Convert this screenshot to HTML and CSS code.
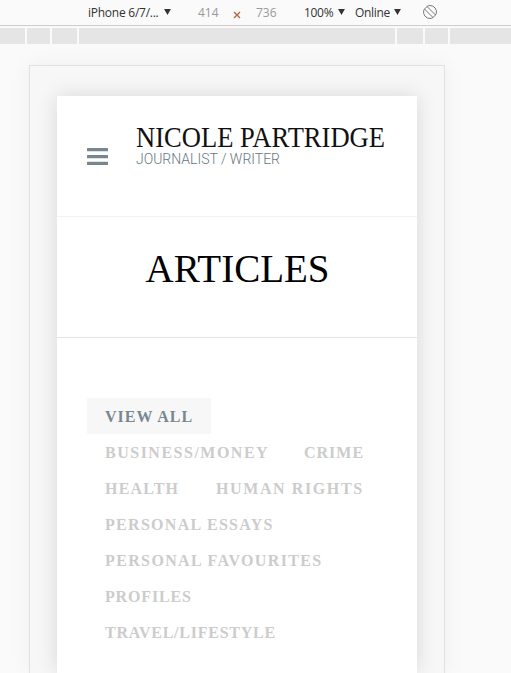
FILE: index.html
```html
<!DOCTYPE html>
<html lang="en">
<head>
  <meta charset="UTF-8">
  <title>Articles - Nicole Partridge</title>
  <link rel="stylesheet" href="styles.css">
</head>
<body>
  <div class="toolbar">
    <span class="device">iPhone 6/7/...</span>
    <svg class="arrow" viewBox="0 0 8 7"><path d="M0 0h8L4 7z"/></svg>
    <span class="size width">414</span>
    <svg class="times" viewBox="0 0 8 8"><path d="M1 1l6 6M7 1L1 7"/></svg>
    <span class="size height">736</span>
    <span class="zoom">100%</span>
    <svg class="arrow" viewBox="0 0 8 7"><path d="M0 0h8L4 7z"/></svg>
    <span class="network">Online</span>
    <svg class="arrow" viewBox="0 0 8 7"><path d="M0 0h8L4 7z"/></svg>
    <svg class="rotate" viewBox="0 0 16 16">
      <path d="M2.500 5L5 2.500L13.500 11L11 13.500z"/>
      <path d="M8 1.500A6.500 6.500 0 0 1 14.300 9.500M8 14.500A6.500 6.500 0 0 1 1.700 6.500"/>
      <path d="M5 2.500Q6.500 1.500 8 1.500M11 13.500Q9.500 14.500 8 14.500M2.500 5L1.700 6.500M13.500 11L14.300 9.500"/>
    </svg>
  </div>
  <div class="ruler">
    <i></i><i></i><i></i><i></i><i></i><i></i><i></i>
  </div>

  <div class="device-frame">
    <div class="page">
      <header class="header">
        <svg class="menu" viewBox="0 0 21 17">
          <rect width="21" height="3.300" rx=".5"/>
          <rect y="6.900" width="21" height="3.300" rx=".5"/>
          <rect y="13.700" width="21" height="3.300" rx=".5"/>
        </svg>
        <svg class="logo" viewBox="0 0 256 50">
          <text class="logo-name" x="1" y="25" textLength="249" lengthAdjust="spacingAndGlyphs">NICOLE PARTRIDGE</text>
          <text class="logo-tag" x="1" y="42.300" textLength="144" lengthAdjust="spacingAndGlyphs">JOURNALIST / WRITER</text>
        </svg>
      </header>

      <div class="title">
        <h1>ARTICLES</h1>
      </div>

      <ul class="filter">
        <li class="active view-all">VIEW ALL</li>
        <li class="business">BUSINESS/MONEY</li>
        <li class="crime">CRIME</li>
        <li class="health">HEALTH</li>
        <li class="rights">HUMAN RIGHTS</li>
        <li class="essays">PERSONAL ESSAYS</li>
        <li class="favourites">PERSONAL FAVOURITES</li>
        <li class="profiles">PROFILES</li>
        <li class="travel">TRAVEL/LIFESTYLE</li>
      </ul>
    </div>
  </div>
</body>
</html>
```
FILE: styles.css
```css
* {
  box-sizing: border-box;
}

body {
  margin: 0;
  height: 100vh;
  overflow: hidden;
  background: #fafafa;
  display: flex;
  flex-direction: column;
}

/* device toolbar */
.toolbar {
  display: flex;
  align-items: center;
  height: 26px;
  flex: none;
  padding-left: 88px;
  border-bottom: 1px solid #ccc;
  font: 12px/25px "Open Sans", sans-serif;
  color: #333;
  white-space: nowrap;
}

.toolbar svg {
  flex: none;
}

.device {
  width: 76px;
  letter-spacing: -0.25px;
}

.arrow {
  width: 7px;
  height: 6px;
  margin-bottom: 1px;
  fill: #333;
}

.size {
  color: #999;
}

.width {
  width: 36px;
  margin-left: 27px;
}

.times {
  width: 8px;
  height: 8px;
  margin: 4px 15px 0 -1px;
  fill: none;
  stroke: #b0683c;
  stroke-width: 1.4;
}

.height {
  width: 48px;
}

.zoom {
  width: 34px;
  letter-spacing: -0.3px;
}

.network {
  width: 39px;
  margin-left: 10px;
  letter-spacing: -0.3px;
}

.rotate {
  width: 16px;
  height: 16px;
  margin: 0 0 2px 21px;
  fill: none;
  stroke: #777;
  stroke-width: 1;
}

.ruler {
  display: grid;
  grid-template-columns: 25px 23px 25px 316px 26px 23px 61px;
  gap: 2px;
  height: 16px;
  flex: none;
  margin-top: 2px;
}

.ruler i {
  background: #e5e5e5;
}

.device-frame {
  flex: 1;
  width: 416px;
  margin: 21px 0 0 29px;
  padding: 30px 27px 0;
  background: #f7f7f7;
  border: 1px solid #e1e1e1;
  border-bottom: 0;
  box-shadow: 0 0 20px rgba(0, 0, 0, 0.05);
}

.page {
  width: 360px;
  height: 100%;
  background: #fff;
  box-shadow: 0 0 20px rgba(0, 0, 0, 0.13);
}

.header {
  display: flex;
  height: 121px;
  padding: 26px 0 0 30px;
  border-bottom: 1px solid #f2f2f2;
}

.menu {
  width: 21px;
  height: 17px;
  margin-top: 26px;
  fill: #77868f;
}

.logo {
  width: 256px;
  height: 50px;
  margin-left: 27px;
  overflow: visible;
}

.logo-name {
  font: 29.5px "Liberation Serif", serif;
  fill: #111;
}

.logo-tag {
  font: 300 14px Roboto, sans-serif;
  fill: #66777f;
}

.title {
  height: 121px;
  padding-top: 28px;
  border-bottom: 1px solid #e5e5e5;
}

h1 {
  margin: 0;
  padding-left: 1px;
  font: 39px/48px "Liberation Serif", serif;
  text-align: center;
  color: #000;
}

.filter {
  display: flex;
  flex-wrap: wrap;
  margin: 0;
  padding: 60px 30px 0;
  list-style: none;
  font: bold 16px/38px "Liberation Serif", serif;
  color: #ccc;
}

.filter li {
  height: 36px;
  padding-left: 18px;
  letter-spacing: 1px;
  white-space: nowrap;
}

.filter .active {
  background: #f7f7f7;
  color: #788891;
}

.view-all {
  width: 124px;
}

.filter .business {
  width: 199px;
  letter-spacing: 1.5px;
}

.crime {
  width: 96px;
}

.filter .health {
  width: 111px;
  letter-spacing: 1.2px;
}

.filter .rights {
  width: 184px;
  letter-spacing: 1.6px;
}

.filter .essays {
  width: 205px;
  letter-spacing: 1.3px;
}

.filter .favourites {
  width: 254px;
  letter-spacing: 1.37px;
}

.filter .profiles {
  width: 140px;
  letter-spacing: 0.85px;
}

.filter .travel {
  width: 208px;
  letter-spacing: 0.75px;
}
```
